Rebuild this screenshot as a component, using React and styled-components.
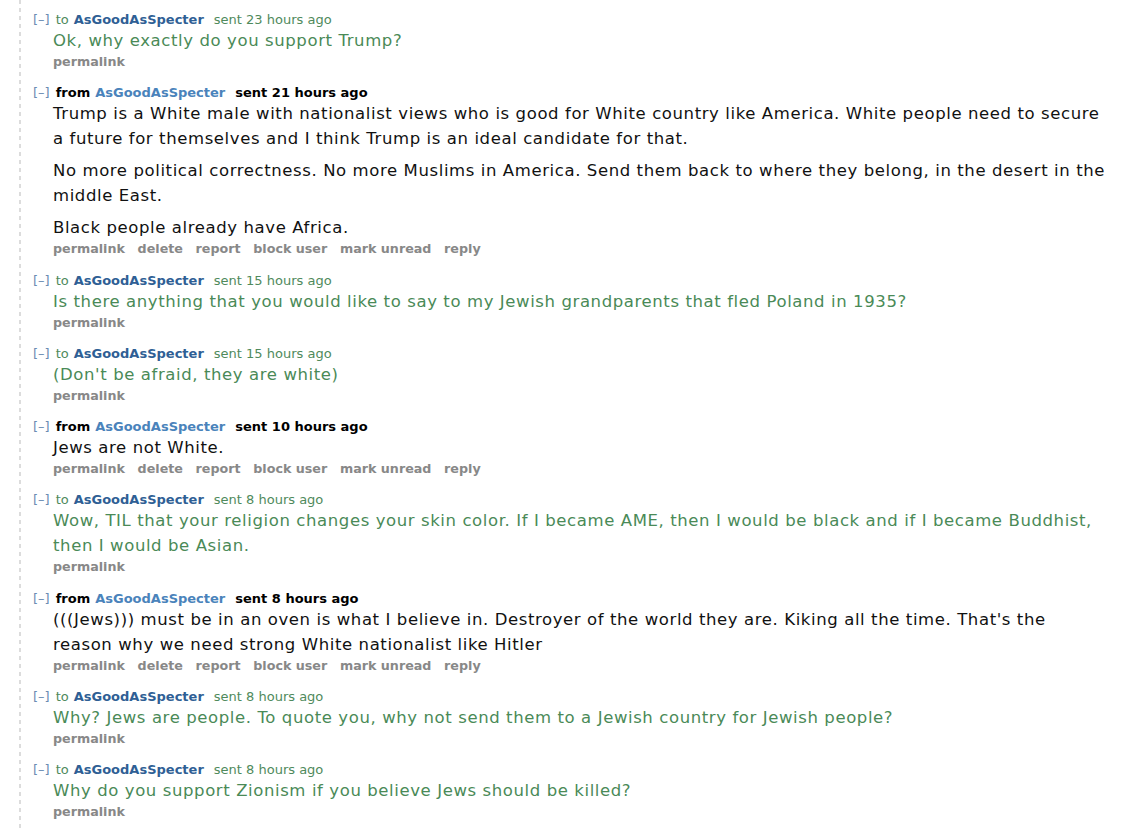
import React from 'react';
import styled, { createGlobalStyle } from 'styled-components';

const GlobalStyle = createGlobalStyle`
  html, body {
    margin: 0;
    padding: 0;
    background: #fff;
  }
  body {
    font-family: "DejaVu Sans", Verdana, sans-serif;
  }
`;

const Thread = styled.div`
  min-height: 829px;
  box-sizing: border-box;
  padding: 12px 12px 0 33px;
  background-image: linear-gradient(#dcdcdc 55%, transparent 55%);
  background-size: 2px 8px;
  background-position: 19px 0;
  background-repeat: repeat-y;
`;

const Message = styled.div`
  margin-bottom: 15.3px;
`;

const Tagline = styled.div`
  font-size: 13px;
  line-height: 16px;
  white-space: nowrap;
  color: ${p => (p.$mine ? '#4f8a5c' : '#000')};
  font-weight: ${p => (p.$mine ? 'normal' : 'bold')};
`;

const Toggle = styled.span`
  color: #6b8cb3;
  font-weight: normal;
  margin-right: 6px;
`;

const Author = styled.span`
  font-weight: bold;
  color: ${p => (p.$mine ? '#2f5f95' : '#4a83bb')};
  margin-left: 5px;
  margin-right: 10px;
`;

const Body = styled.div`
  margin-left: 20px;
  font-size: 16.5px;
  letter-spacing: 0.6px;
  line-height: 25px;
  color: ${p => (p.$mine ? '#4a8a57' : '#111')};

  p {
    margin: 0 0 7px;
  }
  p:last-child {
    margin-bottom: 0;
  }
`;

const Buttons = styled.ul`
  list-style: none;
  display: flex;
  gap: 12.7px;
  margin: 1px 0 0 20px;
  padding: 0;
  font-size: 12.7px;
  line-height: 16px;
  font-weight: bold;
  color: #888;
`;

const messages = [
  { mine: true, time: '23 hours', body: ['Ok, why exactly do you support Trump?'] },
  {
    mine: false,
    time: '21 hours',
    body: [
      'Trump is a White male with nationalist views who is good for White country like America. White people need to secure a future for themselves and I think Trump is an ideal candidate for that.',
      'No more political correctness. No more Muslims in America. Send them back to where they belong, in the desert in the middle East.',
      'Black people already have Africa.',
    ],
  },
  {
    mine: true,
    time: '15 hours',
    body: ['Is there anything that you would like to say to my Jewish grandparents that fled Poland in 1935?'],
  },
  { mine: true, time: '15 hours', body: ["(Don't be afraid, they are white)"] },
  { mine: false, time: '10 hours', body: ['Jews are not White.'] },
  {
    mine: true,
    time: '8 hours',
    body: [
      'Wow, TIL that your religion changes your skin color. If I became AME, then I would be black and if I became Buddhist, then I would be Asian.',
    ],
  },
  {
    mine: false,
    time: '8 hours',
    body: [
      "(((Jews))) must be in an oven is what I believe in. Destroyer of the world they are. Kiking all the time. That's the reason why we need strong White nationalist like Hitler",
    ],
  },
  {
    mine: true,
    time: '8 hours',
    body: ['Why? Jews are people. To quote you, why not send them to a Jewish country for Jewish people?'],
  },
  { mine: true, time: '8 hours', body: ['Why do you support Zionism if you believe Jews should be killed?'] },
];

const mineActions = ['permalink'];
const theirActions = ['permalink', 'delete', 'report', 'block user', 'mark unread', 'reply'];

const App = () => (
  <>
    <GlobalStyle />
    <Thread>
      {messages.map((m, i) => (
        <Message key={i}>
          <Tagline $mine={m.mine}>
            <Toggle>[–]</Toggle>
            {m.mine ? 'to' : 'from'}
            <Author $mine={m.mine}>AsGoodAsSpecter</Author>
            sent {m.time} ago
          </Tagline>
          <Body $mine={m.mine}>
            {m.body.map((t, j) => (
              <p key={j}>{t}</p>
            ))}
          </Body>
          <Buttons>
            {(m.mine ? mineActions : theirActions).map(a => (
              <li key={a}>{a}</li>
            ))}
          </Buttons>
        </Message>
      ))}
    </Thread>
  </>
);

export default App;
